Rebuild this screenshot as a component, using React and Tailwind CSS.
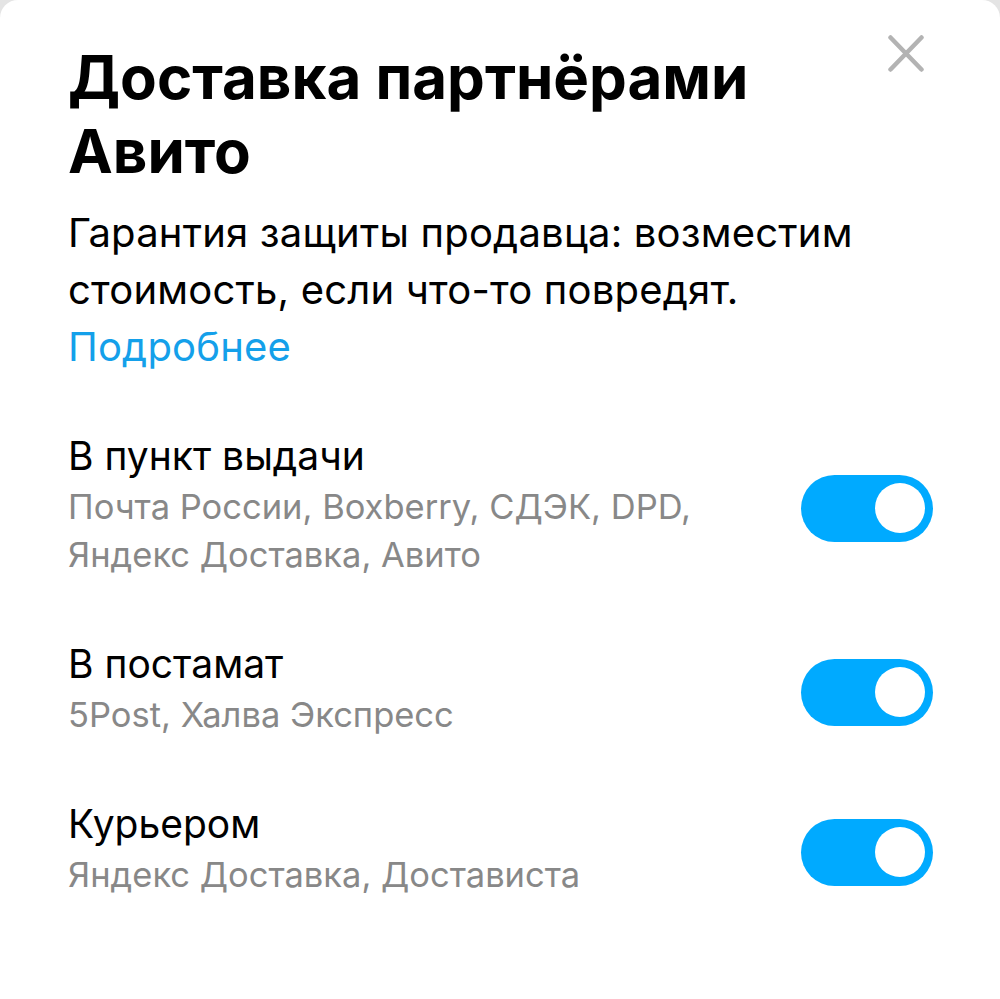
import React from 'react';

const FONT = { fontFamily: 'Inter, Roboto, "Noto Sans", sans-serif' };

const rows = [
  { title: 'В пункт выдачи', sub: ['Почта России, Boxberry, СДЭК, DPD,', 'Яндекс Доставка, Авито'] },
  { title: 'В постамат', sub: ['5Post, Халва Экспресс'] },
  { title: 'Курьером', sub: ['Яндекс Доставка, Достависта'] },
];

const Toggle = () => (
  <div className="mt-[6px] w-[132px] h-[67px] rounded-full bg-[#00aaff] p-[8px] flex justify-end items-center shrink-0">
    <div className="w-[50px] h-[50px] rounded-full bg-white" />
  </div>
);

const App = () => {
  return (
    <div className="bg-[#e4e4e4] min-h-[999px]" style={FONT}>
      <div className="bg-white rounded-t-[18px] min-h-[999px] pl-[68px] pr-[67px] pt-[40px]">
        <div className="flex justify-between items-start">
          <h1 className="text-[60px] leading-[74px] font-bold text-black max-w-[770px]">
            Доставка партнёрами Авито
          </h1>
          <button className="mt-[-5px] mr-[9px] w-[36px] h-[37px] flex items-center justify-center">
            <svg width="36" height="37" viewBox="0 0 36 37" fill="none">
              <path d="M2.5 2.5L33.5 34.5M33.5 2.5L2.5 34.5" stroke="#b3b3b3" strokeWidth="4.5" strokeLinecap="round" />
            </svg>
          </button>
        </div>

        <div className="mt-[16px] text-[40px] leading-[57px] text-black tracking-[0.2px]">
          <p>Гарантия защиты продавца: возместим стоимость, если что-то повредят.</p>
          <a className="block text-[#14a0ea]">Подробнее</a>
        </div>

        <div className="mt-[56px] flex flex-col gap-[60px]">
          {rows.map((r) => (
            <div key={r.title} className="flex items-center justify-between gap-6">
              <div>
                <p className="text-[39px] leading-[50px] text-black">{r.title}</p>
                <p className="mt-[2px] text-[34.5px] leading-[48px] text-[#888888]">
                  {r.sub.map((s, i) => (
                    <span key={i} className="block">{s}</span>
                  ))}
                </p>
              </div>
              <Toggle />
            </div>
          ))}
        </div>
      </div>
    </div>
  );
};

export default App;
